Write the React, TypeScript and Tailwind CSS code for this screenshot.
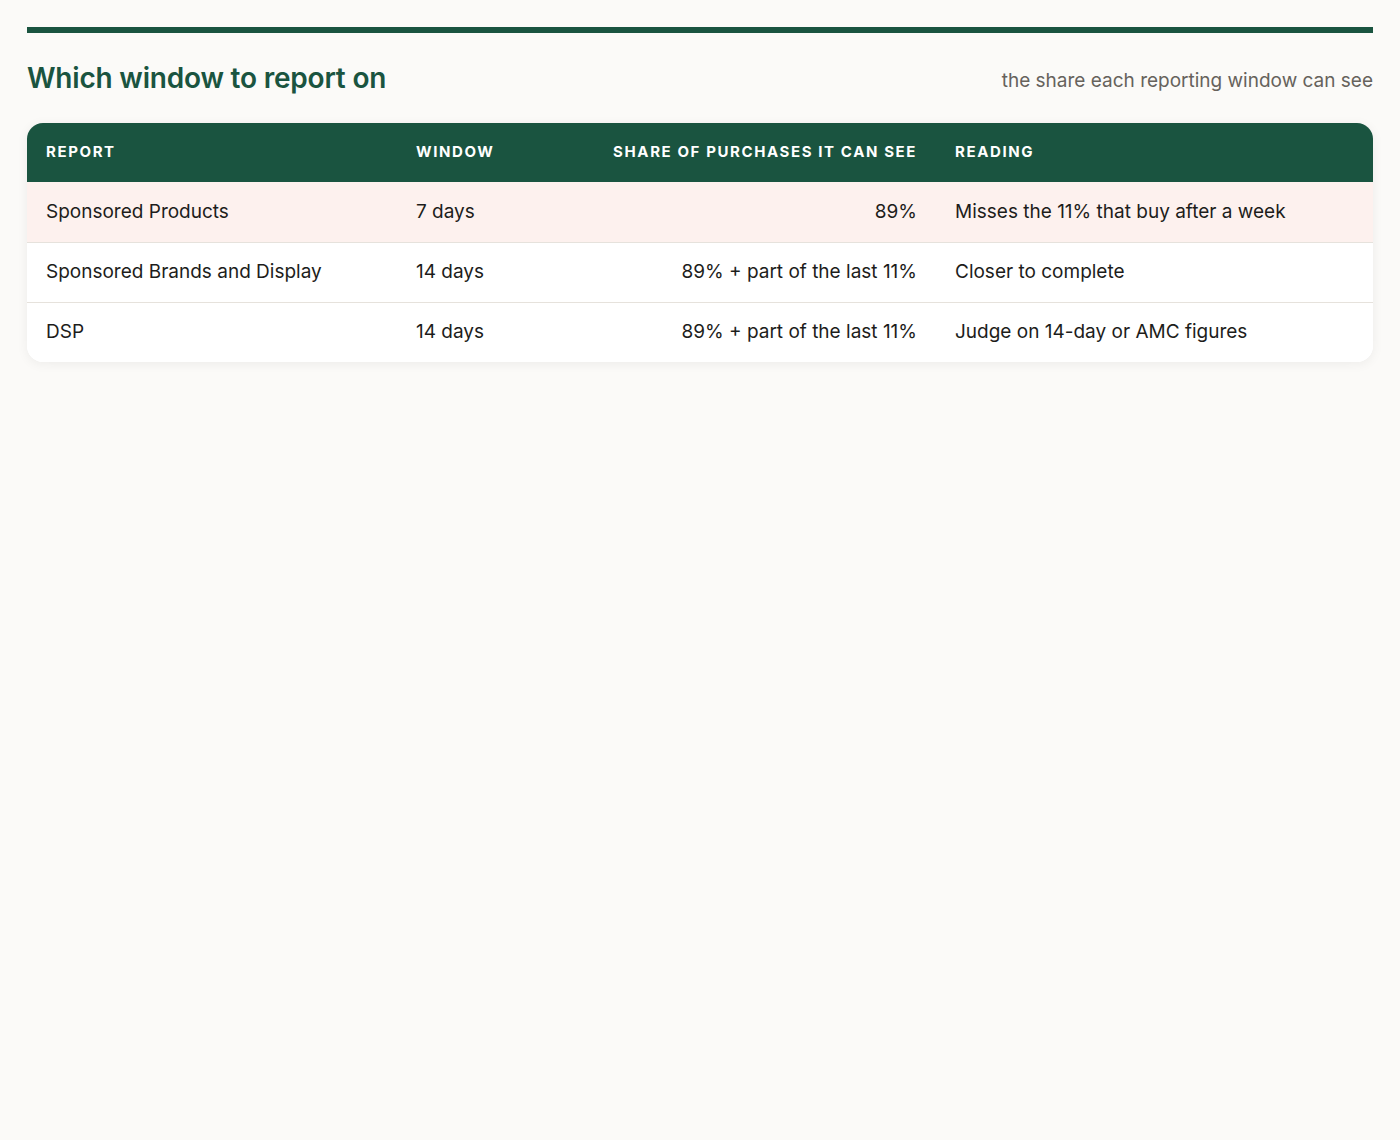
export default function App() {
  const rows = [
    ["Sponsored Products", "7 days", "89%", "Misses the 11% that buy after a week", true],
    ["Sponsored Brands and Display", "14 days", "89% + part of the last 11%", "Closer to complete", false],
    ["DSP", "14 days", "89% + part of the last 11%", "Judge on 14-day or AMC figures", false],
  ] as const;
  return (
    <div className="min-h-[1140px] bg-[#fbfaf8] px-[27px] pt-[27px]" style={{ fontFamily: "Inter, 'Noto Sans', sans-serif" }}>
      <div className="h-[6px] bg-[#1a5440]" />
      <div className="flex items-center justify-between mt-[26px] h-[38px]">
        <h1 className="text-[28px] font-semibold text-[#1a5440] tracking-[-0.2px]">Which window to report on</h1>
        <div className="text-[19px] text-[#66625c] pt-[6px]">the share each reporting window can see</div>
      </div>
      <div className="mt-[26px] rounded-[16px] bg-white shadow-[0_2px_12px_rgba(0,0,0,0.06)] overflow-hidden">
        <table className="w-full border-collapse table-fixed">
          <colgroup>
            <col className="w-[370px]" />
            <col className="w-[185px]" />
            <col className="w-[354px]" />
            <col />
          </colgroup>
          <thead>
            <tr className="bg-[#1a5440] h-[59px] text-white text-[15px] font-bold tracking-[1.6px]">
              <th className="text-left pl-[19px]">REPORT</th>
              <th className="text-left pl-[19px]">WINDOW</th>
              <th className="text-right pr-[19px]">SHARE OF PURCHASES IT CAN SEE</th>
              <th className="text-left pl-[19px]">READING</th>
            </tr>
          </thead>
          <tbody className="text-[19px] text-[#1d1d1b]">
            {rows.map((r, i) => (
              <tr key={i} className={`h-[60px] ${r[4] ? "bg-[#fdf1ee]" : "bg-white"} ${i < 2 ? "border-b border-[#e6e2dc]" : ""}`}>
                <td className="pl-[19px]">{r[0]}</td>
                <td className="pl-[19px]">{r[1]}</td>
                <td className="text-right pr-[19px]">{r[2]}</td>
                <td className="pl-[19px]">{r[3]}</td>
              </tr>
            ))}
          </tbody>
        </table>
      </div>
    </div>
  );
}
